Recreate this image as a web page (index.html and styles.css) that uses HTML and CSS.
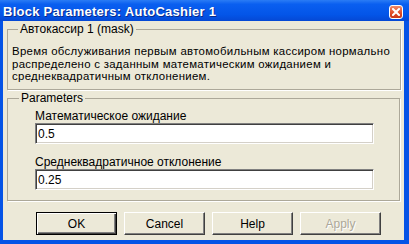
FILE: index.html
```html
<!DOCTYPE html>
<html lang="ru">
<head>
  <meta charset="UTF-8" />
  <title>Block Parameters: AutoCashier 1</title>
  <link rel="stylesheet" href="styles.css">
</head>
<body>

  <div class="window">
    <div class="titlebar">
      <span class="title">Block Parameters: AutoCashier 1</span>
      <span class="close-btn" aria-label="Close">
        <svg width="8" height="8" viewBox="0 0 8 8"><path d="M1 1 L7 7 M7 1 L1 7" stroke="#fff" stroke-width="2" stroke-linecap="square"/></svg>
      </span>
    </div>

    <div class="client">
      <fieldset class="group group-mask">
        <legend>Автокассир 1 (mask)</legend>
        <p class="description">Время обслуживания первым автомобильным кассиром нормально распределено с заданным математическим ожиданием и среднеквадратичным отклонением.</p>
      </fieldset>

      <fieldset class="group group-params">
        <legend>Parameters</legend>
        <label class="field">
          <span class="field-label">Математическое ожидание</span>
          <input type="text" class="field-input" value="0.5" />
        </label>
        <label class="field">
          <span class="field-label">Среднеквадратичное отклонение</span>
          <input type="text" class="field-input" value="0.25" />
        </label>
      </fieldset>

      <div class="buttons">
        <button class="btn btn-default">OK</button>
        <button class="btn">Cancel</button>
        <button class="btn">Help</button>
        <button class="btn" disabled>Apply</button>
      </div>
    </div>
  </div>

</body>
</html>
```

FILE: styles.css
```css
:root {
  --frame-blue: #0553e6;
  --face: #ece9d8;
  --etch: #aca899;
  --text: #000;
  --disabled: #aca899;
}
body {
  margin: 0;
  font-family: 'Liberation Sans', sans-serif;
  font-size: 12px;
  color: var(--text);
}
.window {
  width: 409px;
  height: 244px;
  display: flex;
  flex-direction: column;
  background-color: var(--frame-blue);
  box-sizing: border-box;
  padding: 0 5px 4px 3px;
}
.titlebar {
  height: 21px;
  flex-shrink: 0;
  display: flex;
  align-items: center;
  justify-content: space-between;
  margin-left: -3px;
  margin-right: -5px;
  padding: 2px 6px 0 3px;
  box-sizing: border-box;
  background: linear-gradient(to bottom, #2a7cf5 0%, #0a5ff0 20%, #0355e8 70%, #0548d4 100%);
}
.title {
  color: #fff;
  font-weight: bold;
  font-size: 13px;
  letter-spacing: 0.25px;
  text-shadow: 1px 1px 0 #0a2a8a;
}
.close-btn {
  width: 14px;
  height: 14px;
  box-sizing: border-box;
  display: flex;
  align-items: center;
  justify-content: center;
  border: 1px solid #fff;
  border-radius: 3px;
  background: linear-gradient(to bottom, #f08a6a, #e04a24 60%, #c8381a);
}
.client {
  flex: 1;
  min-height: 0;
  background-color: var(--face);
  padding: 2px 3px 5px 4px;
  display: flex;
  flex-direction: column;
}
.group {
  flex-shrink: 0;
  margin: 0;
  border: 1px solid var(--etch);
  box-shadow: 1px 1px 0 #fff;
  padding: 0 4px;
  min-width: 0;
}
.group legend {
  padding: 0 2px;
  margin-left: 6px;
  line-height: 13px;
  background-color: var(--face);
}
.group-mask {
  padding-top: 9px;
  padding-bottom: 6px;
}
.description {
  margin: 0;
  font-size: 11.4px;
  line-height: 12.5px;
  letter-spacing: 0.3px;
}
.group-params {
  margin-top: 2px;
  margin-right: 1px;
  padding-top: 4px;
  padding-bottom: 10px;
  display: flex;
  flex-direction: column;
  gap: 11px;
}
.group-params legend {
  margin-left: 7px;
}
.field {
  display: flex;
  flex-direction: column;
  margin: 0 21px 0 23px;
}
.field-label {
  line-height: 14px;
}
.field-input {
  height: 21px;
  box-sizing: border-box;
  margin: 0;
  padding: 1px 2px 0;
  font: inherit;
  color: #000;
  background-color: #fff;
  border: 1px solid;
  border-color: #808080 #fff #fff #808080;
  box-shadow: inset 1px 1px 0 #404040, inset -1px -1px 0 #d4d0c8;
  outline: none;
}
.buttons {
  display: flex;
  gap: 7px;
  margin-top: auto;
  padding-left: 29px;
}
.btn {
  width: 81px;
  height: 23px;
  box-sizing: border-box;
  margin: 0;
  font-family: 'Liberation Sans', sans-serif;
  font-size: 12px;
  color: #000;
  background-color: var(--face);
  border: 1px solid;
  border-color: #fff #404040 #404040 #fff;
  box-shadow: inset -1px -1px 0 #808080;
  padding: 0;
}
.btn-default {
  border-color: #000;
  box-shadow: inset 1px 1px 0 #fff, inset -1px -1px 0 #404040, inset -2px -2px 0 #808080;
}
.btn:disabled {
  color: var(--disabled);
  text-shadow: 1px 1px 0 #fff;
}
```
